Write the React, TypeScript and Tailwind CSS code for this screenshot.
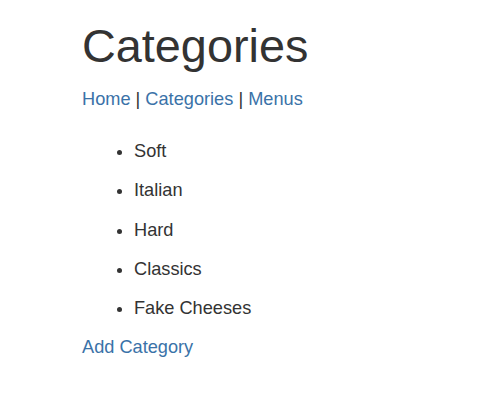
export default function App() {
  const items = ["Soft", "Italian", "Hard", "Classics", "Fake Cheeses"];
  return (
    <div
      className="w-[500px] h-[418px] bg-white pl-[82px] pt-[21px] text-[#333333]"
      style={{ fontFamily: '"Liberation Sans", Arial, sans-serif' }}
    >
      <h1 className="text-[46.8px] leading-[51.5px] font-normal">Categories</h1>
      <div className="mt-[13.5px] text-[18.2px] leading-[26px]">
        <a className="text-[#3a72a8]" href="#">Home</a> |{" "}
        <a className="text-[#3a72a8]" href="#">Categories</a> |{" "}
        <a className="text-[#3a72a8]" href="#">Menus</a>
      </div>
      <ul className="mt-[26px] list-disc pl-[52px] text-[18.2px] leading-[26px]">
        {items.map((it) => (
          <li key={it} className="mb-[13.3px]">
            {it}
          </li>
        ))}
      </ul>
      <div className="mt-[1px] text-[18.2px] leading-[26px]">
        <a className="text-[#3a72a8]" href="#">Add Category</a>
      </div>
    </div>
  );
}
